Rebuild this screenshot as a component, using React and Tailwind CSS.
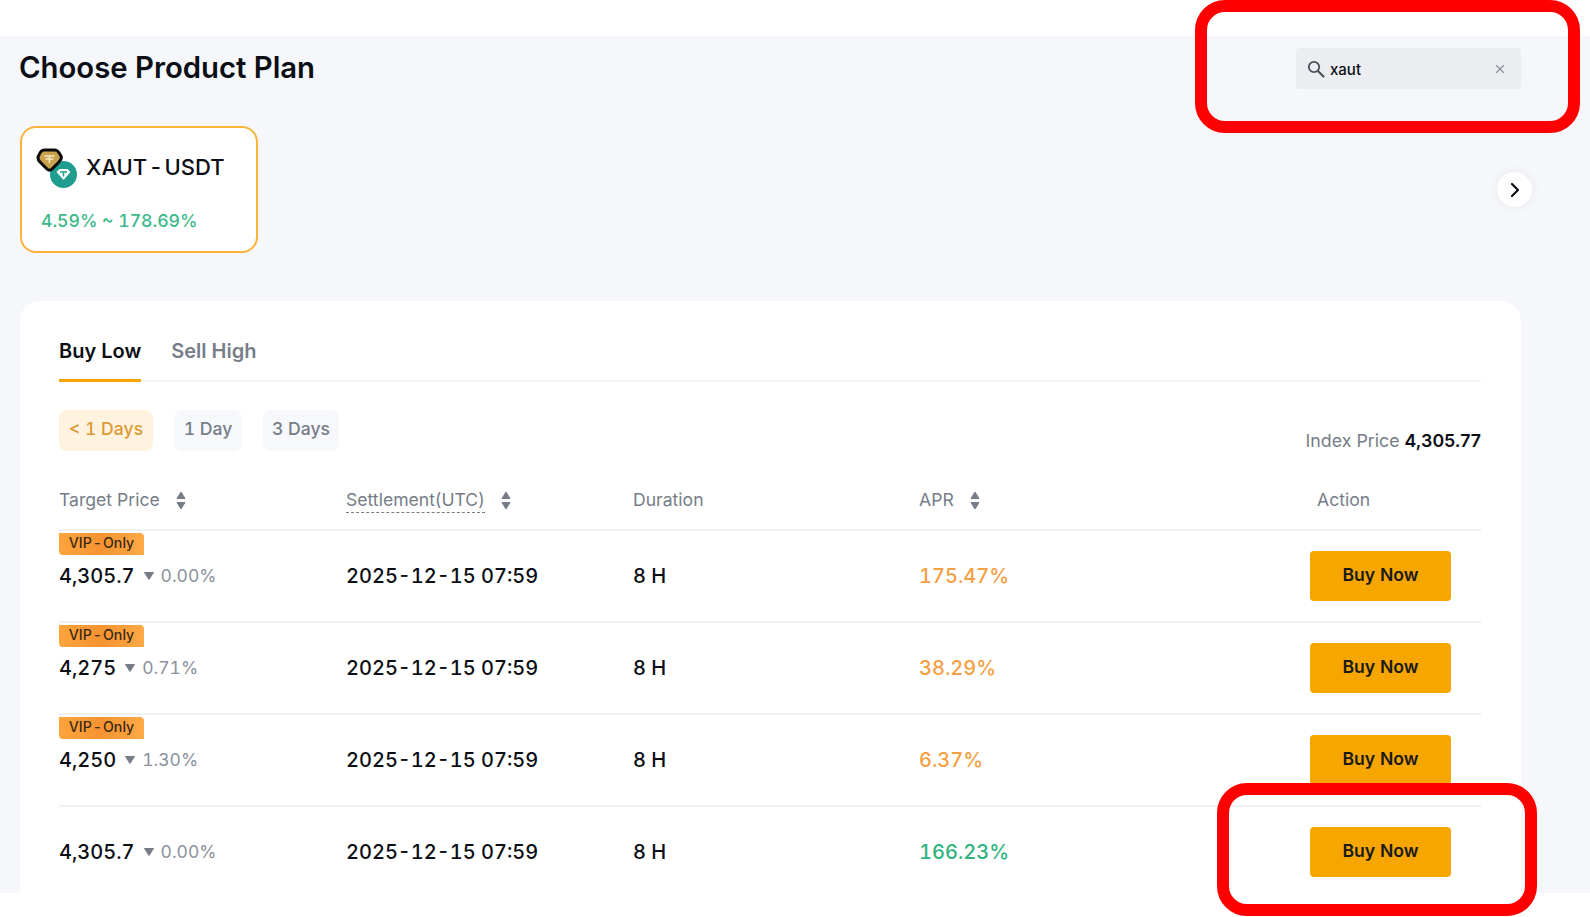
import React from 'react';
import { X, ChevronRight } from 'lucide-react';

const rows = [
  { price: '4,305.7', change: '0.00%', apr: '175.47%', vip: true },
  { price: '4,275', change: '0.71%', apr: '38.29%', vip: true },
  { price: '4,250', change: '1.30%', apr: '6.37%', vip: true },
  { price: '4,305.7', change: '0.00%', apr: '166.23%', vip: false },
];

const SortIcon = () => (
  <svg width="10" height="19" viewBox="0 0 10 19" className="text-[#767d88]">
    <path d="M5 1 L9 7.5 H1 Z" fill="currentColor" stroke="currentColor" strokeWidth="1" strokeLinejoin="round" />
    <path d="M5 18 L9 11.5 H1 Z" fill="currentColor" stroke="currentColor" strokeWidth="1" strokeLinejoin="round" />
  </svg>
);

const SearchIcon = () => (
  <svg width="18" height="18" viewBox="0 0 18 18" fill="none" stroke="#4b5058">
    <circle cx="7" cy="7" r="5.2" strokeWidth="1.8" />
    <path d="M11 11 L16.5 16.5" strokeWidth="2.2" strokeLinecap="round" />
  </svg>
);

const TokenIcon = () => (
  <svg width="42" height="42" viewBox="0 0 42 42">
    <circle cx="27.5" cy="26.5" r="13.5" fill="#1f9d8f" />
    <path d="M20.5 24 L23.5 21 H31.5 L34.5 24 L27.5 32 Z" fill="#fff" />
    <path d="M24 24 H31 M27.5 24 V28.5" stroke="#1f9d8f" strokeWidth="1.5" />
    <path
      d="M8 2 H19 C21 2 23 4 25 8 C26 10 25 12 23 14 L16 21 C14.5 22.5 12.5 22.5 11 21 L4 14 C2 12 1.5 10 2.5 8 C4 4 6 2 8 2 Z"
      fill="#c9a24e"
      stroke="#0a0a0a"
      strokeWidth="3"
    />
    <path d="M8.5 8 H18.5 M13.5 8 V15 M9.5 11 H17.5" stroke="#f6e7bd" strokeWidth="1.6" />
  </svg>
);

const App = () => {
  return (
    <div className="relative h-[917px] w-[1590px] overflow-hidden bg-white pt-[36px] font-['Inter',sans-serif] text-[#0b0e14]">
      <div className="h-[857px] bg-[#f5f7fb] pl-[20px] pr-[69px]">
        {/* Header */}
        <div className="flex h-[90px] items-start justify-between">
          <h1 className="mt-[14px] ml-[-1px] text-[29.3px] leading-[36px] font-semibold">Choose Product Plan</h1>
          <div className="mt-[12px] flex h-[41px] w-[225px] items-center rounded bg-[#ebedf1] pl-[11px] pr-[14px]">
            <SearchIcon />
            <span className="ml-[5px] flex-1 pt-[3px] text-[15px] font-medium">xaut</span>
            <X size={14} strokeWidth={2} className="text-[#8b9098]" />
          </div>
        </div>

        {/* Product list */}
        <div className="flex items-center justify-between">
          <div className="h-[127px] w-[238px] rounded-2xl border-2 border-[#fbb33a] bg-white pl-[14px] pt-[20px]">
            <div className="flex items-start">
              <TokenIcon />
              <span className="ml-[8px] mt-[5px] text-[22px] leading-[28px] font-medium">
                XAUT<span className="mx-[3.5px]">-</span>USDT
              </span>
            </div>
            <div className="ml-[5px] mt-[19px] text-[17.6px] leading-[24px] font-medium tabular-nums text-[#3cb98a]">4.59% ~ 178.69%</div>
          </div>
          <div className="mr-[-11px] flex h-[35px] w-[35px] items-center justify-center rounded-full bg-white shadow-[0_0_12px_rgba(0,0,0,0.06)]">
            <ChevronRight size={24} strokeWidth={2.2} />
          </div>
        </div>

        {/* Main card */}
        <div className="mt-[48px] h-[592px] rounded-t-[20px] bg-white pl-[39px] pr-[40px] pt-[34px]">
          <div className="flex h-[47px] gap-[30px] border-b-2 border-[#f3f4f6] text-[20px] leading-[32px] font-semibold">
            <div className="h-[47px] border-b-[3px] border-[#f7a600]">Buy Low</div>
            <div className="text-[#767d88]">Sell High</div>
          </div>

          <div className="mt-[28px] flex items-start justify-between">
            <div className="flex gap-[21px] text-[17.6px] font-medium tabular-nums">
              <div className="flex h-[41px] w-[94px] items-center justify-center rounded-lg bg-[#fff3e0] pb-[2px] text-[#dc9a35]">&lt; 1 Days</div>
              <div className="flex h-[41px] w-[68px] items-center justify-center rounded-lg bg-[#f7f8fb] pb-[2px] text-[#767d88]">1 Day</div>
              <div className="flex h-[41px] w-[76px] items-center justify-center rounded-lg bg-[#f7f8fb] pb-[2px] text-[#767d88]">3 Days</div>
            </div>
            <div className="mt-[19px] text-[17.8px] leading-[24px] text-[#767d88]">
              Index Price <span className="font-semibold text-[#0b0e14]">4,305.77</span>
            </div>
          </div>

          {/* Table head */}
          <div className="mt-[19px] grid h-[59px] grid-cols-[287px_287px_286px_391px_170px] items-center border-b-2 border-[#edf0f5] text-[17.6px] text-[#767d88]">
            <div className="flex items-center gap-[16px]">Target Price <SortIcon /></div>
            <div className="flex items-center gap-[16px]">
              <span className="border-b border-dashed border-[#767d88] leading-[24px]">Settlement(UTC)</span>
              <SortIcon />
            </div>
            <div>Duration</div>
            <div className="flex items-center gap-[16px]">APR <SortIcon /></div>
            <div className="pl-[7px]">Action</div>
          </div>

          {/* Table rows */}
          {rows.map((row, i) => (
            <div
              key={i}
              className={`relative grid h-[92px] grid-cols-[287px_287px_286px_391px_170px] items-center border-b-2 text-[20px] font-medium tabular-nums ${i < rows.length - 1 ? 'border-[#edf0f5]' : 'border-transparent'}`}
            >
              {row.vip && (
                <div className="absolute left-0 top-[2px] flex h-[22px] w-[85px] items-center justify-center rounded-tr rounded-bl bg-gradient-to-r from-[#ffa53d] via-[#f59331] to-[#ffa947] pb-[2px] text-[14.2px] text-[#3a2a14]">
                  VIP<span className="mx-[1px]">-</span>Only
                </div>
              )}
              <div className="flex items-center">
                <span>{row.price}</span>
                <svg width="12" height="10" viewBox="0 0 12 10" className="ml-[8px] text-[#767d88]">
                  <path d="M1.5 1.5 H10.5 L6 8.5 Z" fill="currentColor" stroke="currentColor" strokeWidth="1" strokeLinejoin="round" />
                </svg>
                <span className="ml-[6px] text-[17.5px] font-normal text-[#8a919c]">{row.change}</span>
              </div>
              <div>2025-12-15 07:59</div>
              <div>8 H</div>
              <div className={row.vip ? 'text-[#f5a044]' : 'text-[#2fb47f]'}>{row.apr}</div>
              <div>
                <button className="h-[50px] w-[141px] rounded bg-[#f7a600] pb-[2px] text-[17.6px] font-semibold text-[#1a1a1a]">Buy Now</button>
              </div>
            </div>
          ))}
        </div>
      </div>

      {/* Red annotation boxes */}
      <div className="absolute left-[1195px] top-0 h-[133px] w-[385px] rounded-[30px] border-[12px] border-[#ff0000]" />
      <div className="absolute left-[1217px] top-[783px] h-[133px] w-[320px] rounded-[30px] border-[12px] border-[#ff0000]" />
    </div>
  );
};

export default App;
